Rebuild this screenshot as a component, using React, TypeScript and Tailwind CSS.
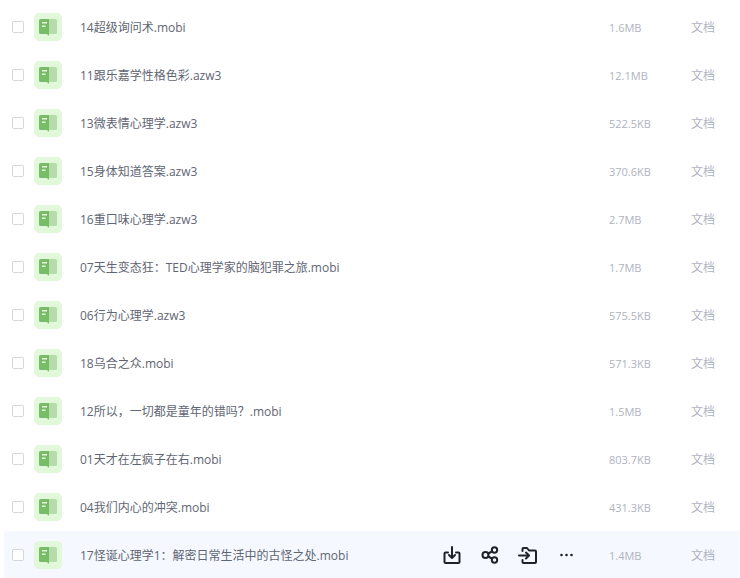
const rows: [string, string][] = [
  ["14超级询问术.mobi", "1.6MB"],
  ["11跟乐嘉学性格色彩.azw3", "12.1MB"],
  ["13微表情心理学.azw3", "522.5KB"],
  ["15身体知道答案.azw3", "370.6KB"],
  ["16重口味心理学.azw3", "2.7MB"],
  ["07天生变态狂：TED心理学家的脑犯罪之旅.mobi", "1.7MB"],
  ["06行为心理学.azw3", "575.5KB"],
  ["18乌合之众.mobi", "571.3KB"],
  ["12所以，一切都是童年的错吗？.mobi", "1.5MB"],
  ["01天才在左疯子在右.mobi", "803.7KB"],
  ["04我们内心的冲突.mobi", "431.3KB"],
  ["17怪诞心理学1：解密日常生活中的古怪之处.mobi", "1.4MB"],
];

function BookIcon() {
  return (
    <div className="flex h-7 w-7 shrink-0 items-center justify-center rounded-[5px] bg-[#e2f8db]">
      <svg width="20" height="20" viewBox="0 0 20 20">
        <rect x="9" y="2" width="10" height="15" rx="1.5" fill="#b5dcaa" />
        <path d="M1 3.500A1.500 1.500 0 0 1 2.500 2H11v17l-2-2H2.500A1.500 1.500 0 0 1 1 15.500Z" fill="#76bd66" />
        <rect x="4" y="5" width="5" height="1.500" fill="#e8f6e4" />
        <rect x="4" y="8.500" width="3.500" height="1.500" fill="#e8f6e4" />
      </svg>
    </div>
  );
}

function Actions() {
  const c = { fill: "none", stroke: "#1f2329", strokeWidth: 2, strokeLinecap: "round" as const, strokeLinejoin: "round" as const };
  return (
    <div className="absolute left-[438px] top-[14px] flex items-center gap-[18px]">
      <svg width="20" height="20" viewBox="0 0 20 20" {...c}>
        <path d="M6 7.500H3.500A1 1 0 0 0 2.500 8.500V17a1 1 0 0 0 1 1h13a1 1 0 0 0 1-1V8.500a1 1 0 0 0-1-1H14" />
        <path d="M10 2v10" />
        <path d="M7 10l3 3 3-3" />
      </svg>
      <svg width="20" height="20" viewBox="0 0 20 20" {...c}>
        <circle cx="5.500" cy="10" r="3" />
        <circle cx="14.500" cy="5" r="2.700" />
        <circle cx="14.500" cy="15" r="2.700" />
        <path d="M8.200 8.500l3.800-2M8.200 11.500l3.800 2" />
      </svg>
      <svg width="20" height="20" viewBox="0 0 20 20" {...c}>
        <path d="M4.500 6V4a1 1 0 0 1 1-1h3.500l2 2.500H17a1 1 0 0 1 1 1V17a1 1 0 0 1-1 1H5.500a1 1 0 0 1-1-1v-2" />
        <path d="M1 10.500H10.500" />
        <path d="M8 7.500l3 3-3 3" />
      </svg>
      <svg width="20" height="20" viewBox="0 0 20 20" fill="#1f2329">
        <circle cx="5.500" cy="10" r="1.300" />
        <circle cx="10.500" cy="10" r="1.300" />
        <circle cx="15.500" cy="10" r="1.300" />
      </svg>
    </div>
  );
}

export default function App() {
  return (
    <div className="h-[578px] w-[740px] overflow-hidden bg-white pt-[3px] font-['Open_Sans','Noto_Sans_CJK_SC',sans-serif]">
      {rows.map(([name, size], i) => {
        const last = i === rows.length - 1;
        return (
          <div
            key={name}
            className={`relative ml-1 flex h-12 items-center pl-2 ${last ? "bg-[#f5f8fe]" : ""}`}
          >
            <span className="h-3 w-3 shrink-0 rounded-[2px] border border-[#d4d7de] bg-white" />
            <div className="ml-[10px]">
              <BookIcon />
            </div>
            <div className="ml-[18px] w-[500px] shrink-0 whitespace-nowrap pt-[2px] text-xs text-[#5f6673]">{name}</div>
            <div className="ml-[29px] w-[82px] shrink-0 pt-[2px] text-[11px] text-[#afb3bf]">{size}</div>
            <div className="pt-[2px] text-xs text-[#afb3bf]">文档</div>
            {last && <Actions />}
          </div>
        );
      })}
    </div>
  );
}
